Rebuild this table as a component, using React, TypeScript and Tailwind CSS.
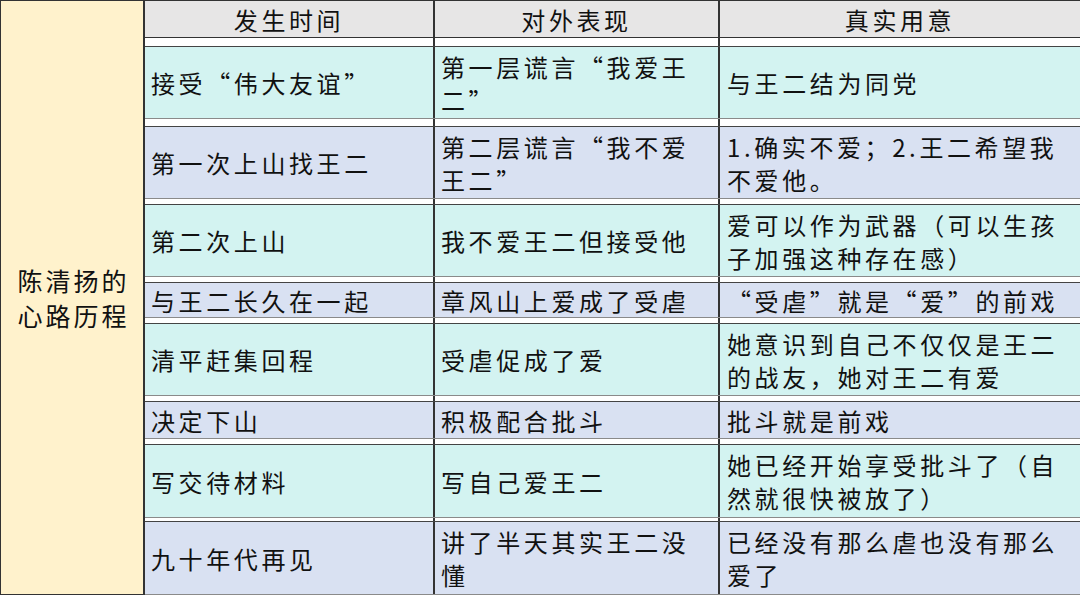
import React from 'react';

type Row = {
  gap: string;
  h: string;
  bg: string;
  cells: string[][];
};

// Each row: white gap above it, its height, its colour, and lines for each column
const rows: Row[] = [
  { gap: 'h-[8px]', h: 'h-[73px]', bg: 'bg-[#d3f3f1]', cells: [['接受“伟大友谊”'], ['第一层谎言“我爱王', '二”'], ['与王二结为同党']] },
  { gap: 'h-[7px]', h: 'h-[73px]', bg: 'bg-[#d9e1f2]', cells: [['第一次上山找王二'], ['第二层谎言“我不爱', '王二”'], ['1.确实不爱；2.王二希望我', '不爱他。']] },
  { gap: 'h-[5px]', h: 'h-[73px]', bg: 'bg-[#d3f3f1]', cells: [['第二次上山'], ['我不爱王二但接受他'], ['爱可以作为武器（可以生孩', '子加强这种存在感）']] },
  { gap: 'h-[5px]', h: 'h-[36px]', bg: 'bg-[#d9e1f2]', cells: [['与王二长久在一起'], ['章风山上爱成了受虐'], ['“受虐”就是“爱”的前戏']] },
  { gap: 'h-[5px]', h: 'h-[73px]', bg: 'bg-[#d3f3f1]', cells: [['清平赶集回程'], ['受虐促成了爱'], ['她意识到自己不仅仅是王二', '的战友，她对王二有爱']] },
  { gap: 'h-[5px]', h: 'h-[38px]', bg: 'bg-[#d9e1f2]', cells: [['决定下山'], ['积极配合批斗'], ['批斗就是前戏']] },
  { gap: 'h-[5px]', h: 'h-[74px]', bg: 'bg-[#d3f3f1]', cells: [['写交待材料'], ['写自己爱王二'], ['她已经开始享受批斗了（自', '然就很快被放了）']] },
  { gap: 'h-[3px]', h: 'h-[74px]', bg: 'bg-[#d9e1f2]', cells: [['九十年代再见'], ['讲了半天其实王二没', '懂'], ['已经没有那么虐也没有那么', '爱了']] },
];

const cols = 'grid grid-cols-[290px_285px_1fr]';
const divider = 'border-r-2 border-[#333]';

const Gap = ({ h }: { h: string }) => (
  <div className={`${cols} ${h} bg-white`}>
    <div className={divider} />
    <div className={divider} />
    <div />
  </div>
);

const App = () => {
  return (
    <div className="w-[1080px] h-[595px] bg-white flex overflow-hidden text-[#111] font-['Noto_Sans_CJK_SC','Liberation_Sans',sans-serif]">
      <div className="w-[145px] shrink-0 h-[595px] bg-[#fff2cc] border-l border-t border-b border-r-2 border-[#333] flex items-center justify-center">
        <div className="text-[25px] leading-[35px] tracking-[3px] pl-[3px]">
          <div>陈清扬的</div>
          <div>心路历程</div>
        </div>
      </div>

      <div className="flex-1 flex flex-col text-[24px] leading-[33px] tracking-[3.6px]">
        <div className={`${cols} h-[38px] bg-[#e7e6e6] border-t border-b border-[#333]`}>
          <div className={`${divider} flex items-center justify-center`}>发生时间</div>
          <div className={`${divider} flex items-center justify-center`}>对外表现</div>
          <div className="flex items-center justify-center">真实用意</div>
        </div>

        {rows.map((row, i) => (
          <React.Fragment key={i}>
            <Gap h={row.gap} />
            <div className={`${cols} ${row.h} ${row.bg} border-t border-t-[#444] border-b border-b-[#8a8a8a]`}>
              {row.cells.map((lines, j) => (
                <div
                  key={j}
                  className={`flex flex-col justify-center whitespace-nowrap ${j < 2 ? divider + ' pl-[6px]' : 'pl-[7px]'}`}
                >
                  {lines.map((line, k) => (
                    <div key={k}>{line}</div>
                  ))}
                </div>
              ))}
            </div>
          </React.Fragment>
        ))}
      </div>
    </div>
  );
};

export default App;
